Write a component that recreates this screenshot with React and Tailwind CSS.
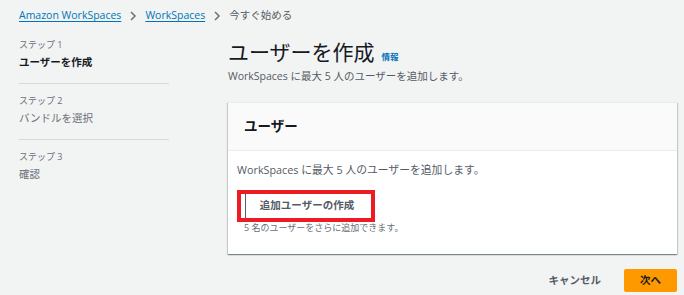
import React from "react";

function Chevron() {
  return (
    <svg width="8" height="10" viewBox="0 0 8 10" className="mx-[8px]">
      <path d="M2 1l4 4-4 4" fill="none" stroke="#687078" strokeWidth="1.5" />
    </svg>
  );
}

function Step({ n, title, active, last }) {
  return (
    <div className={last ? "" : "border-b border-[#d5dbdb] pb-[14px] mb-[11px]"}>
      <div className="text-[9px] leading-[12px] text-[#687078] mb-[4px]">ステップ {n}</div>
      <div
        className={
          active
            ? "text-[10.5px] leading-[14px] font-bold text-[#16191f]"
            : "text-[10.5px] leading-[14px] text-[#687078]"
        }
      >
        {title}
      </div>
    </div>
  );
}

export default function App() {
  return (
    <div className="w-[684px] h-[295px] bg-[#f2f3f3] overflow-hidden font-[family-name:'Open_Sans','Noto_Sans_CJK_JP',sans-serif] text-[#16191f]">
      {/* breadcrumb */}
      <div className="flex items-center h-[32px] pl-[19px] text-[10.5px]">
        <span className="text-[#0073bb] underline underline-offset-[2px] decoration-[1px]">Amazon WorkSpaces</span>
        <Chevron />
        <span className="text-[#0073bb] underline underline-offset-[2px] decoration-[1px]">WorkSpaces</span>
        <Chevron />
        <span className="text-[#545b64]">今すぐ始める</span>
      </div>

      <div className="flex">
        {/* nav */}
        <div className="w-[150px] ml-[19px] pt-[7px]">
          <Step n="1" title="ユーザーを作成" active />
          <Step n="2" title="バンドルを選択" />
          <Step n="3" title="確認" last />
        </div>

        {/* main */}
        <div className="ml-[59px] w-[449px] pt-[7px]">
          <div className="flex items-baseline h-[26px]">
            <span className="text-[21px] leading-[26px] text-[#16191f]">ユーザーを作成</span>
            <span className="ml-[7px] text-[8.5px] font-bold text-[#0073bb]">情報</span>
          </div>
          <div className="mt-[4px] text-[10.5px] leading-[14px] text-[#545b64]">
            WorkSpaces に最大 5 人のユーザーを追加します。
          </div>

          <div className="mt-[19px] bg-white border-t border-[#eaeded] shadow-[0_1px_1px_0_rgba(0,28,36,0.3),1px_1px_1px_0_rgba(0,28,36,0.15),-1px_1px_1px_0_rgba(0,28,36,0.15)]">
            <div className="h-[48px] bg-[#fafafa] border-b border-[#eaeded] flex items-center pl-[16px]">
              <span className="text-[13.5px] font-bold text-[#16191f]">ユーザー</span>
            </div>
            <div className="pl-[9px] pt-[12px] pb-[20px]">
              <div className="text-[10.8px] leading-[14px] text-[#545b64]">
                WorkSpaces に最大 5 人のユーザーを追加します。
              </div>
              <div className="mt-[13px] w-[138px] h-[32px] border-[4px] border-[#ed1c24] flex pl-[4px] py-[0px]">
                <div className="flex-1 bg-white border-l-[1.5px] border-[#545b64] flex items-center justify-center">
                  <span className="text-[10.5px] font-bold text-[#545b64] -ml-[3px]">追加ユーザーの作成</span>
                </div>
              </div>
              <div className="pl-[7px] text-[9px] leading-[12px] text-[#687078]">
                5 名のユーザーをさらに追加できます。
              </div>
            </div>
          </div>

          <div className="mt-[15px] flex items-center justify-end">
            <span className="text-[10.5px] text-[#545b64] font-bold mr-[23px]">キャンセル</span>
            <div className="w-[53px] h-[23px] bg-[#ff9900] rounded-[2px] flex items-center justify-center">
              <span className="text-[10.5px] font-bold text-[#16191f]">次へ</span>
            </div>
          </div>
        </div>
      </div>
    </div>
  );
}
